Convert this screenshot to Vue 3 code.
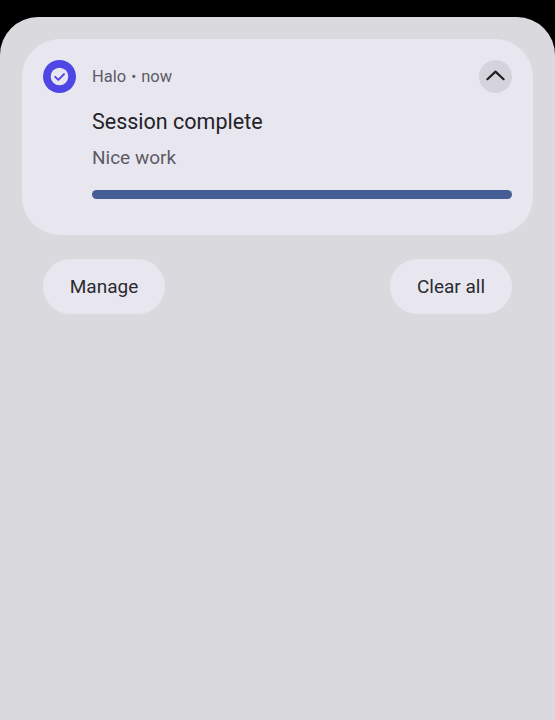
<script setup>
const actions = ['Manage', 'Clear all']
</script>

<template>
  <div class="screen">
    <div class="sheet">
      <section class="card">
        <header class="head">
          <span class="app-icon">
            <svg viewBox="0 0 33 33" width="33" height="33" aria-hidden="true">
              <circle cx="16.5" cy="16.5" r="8.8" fill="#e8e7f0" />
              <path d="M12.2 16.9l3.1 3 5.7-5.8" fill="none" stroke="#4f46e5" stroke-width="2" stroke-linecap="round" stroke-linejoin="round" />
            </svg>
          </span>
          <span class="meta">Halo<span class="dot">•</span>now</span>
          <span class="toggle">
            <svg viewBox="0 0 33 33" width="33" height="33" aria-hidden="true">
              <path d="M8.4 19.2l8.1-7.6 8.1 7.6" fill="none" stroke="#1f1f24" stroke-width="2.2" stroke-linecap="round" stroke-linejoin="round" />
            </svg>
          </span>
        </header>
        <div class="body">
          <h1 class="title">Session complete</h1>
          <p class="text">Nice work</p>
          <div class="progress"></div>
        </div>
      </section>
      <div class="actions">
        <button v-for="a in actions" :key="a" class="pill" type="button">{{ a }}</button>
      </div>
    </div>
  </div>
</template>

<style>
html, body { margin: 0; background: #000; }
</style>

<style scoped>
.screen {
  width: 555px;
  height: 720px;
  background: #000;
  padding-top: 16.5px;
  box-sizing: border-box;
  overflow: hidden;
  font-family: Roboto, "Liberation Sans", sans-serif;
}
.sheet {
  height: 100%;
  background: #dad9de;
  border-radius: 38px 38px 0 0;
  padding: 22.5px 22px 0;
  box-sizing: border-box;
}
.card {
  background: #e8e7f0;
  border-radius: 38px;
  height: 196px;
  padding: 21px 21px 0;
  box-sizing: border-box;
}
.head {
  display: flex;
  align-items: center;
  height: 33px;
}
.app-icon {
  width: 33px;
  height: 33px;
  border-radius: 50%;
  background: #4f46e5;
  display: block;
  flex: none;
}
.app-icon svg, .toggle svg { display: block; }
.meta {
  margin-left: 16px;
  font-size: 16.5px;
  color: #5c5b66;
  flex: 1;
}
.dot {
  font-size: 15px;
  margin: 0 5px;
}
.toggle {
  width: 33px;
  height: 33px;
  border-radius: 50%;
  background: #d5d4dc;
  flex: none;
}
.body {
  margin-left: 49px;
}
.title {
  margin: 14px 0 0;
  font-size: 21.5px;
  font-weight: 400;
  line-height: 30px;
  color: #232328;
}
.text {
  margin: 7px 0 0;
  font-size: 19px;
  line-height: 27px;
  color: #5c5b66;
}
.progress {
  margin-top: 19px;
  height: 9px;
  border-radius: 4.5px;
  background: #465e96;
}
.actions {
  display: flex;
  justify-content: space-between;
  margin-top: 24px;
  padding: 0 21px;
}
.pill {
  width: 122px;
  height: 55px;
  border: 0;
  border-radius: 27.5px;
  background: #e8e7f0;
  color: #2a2a30;
  font: 400 19px Roboto, "Liberation Sans", sans-serif;
  padding: 0;
}
</style>
